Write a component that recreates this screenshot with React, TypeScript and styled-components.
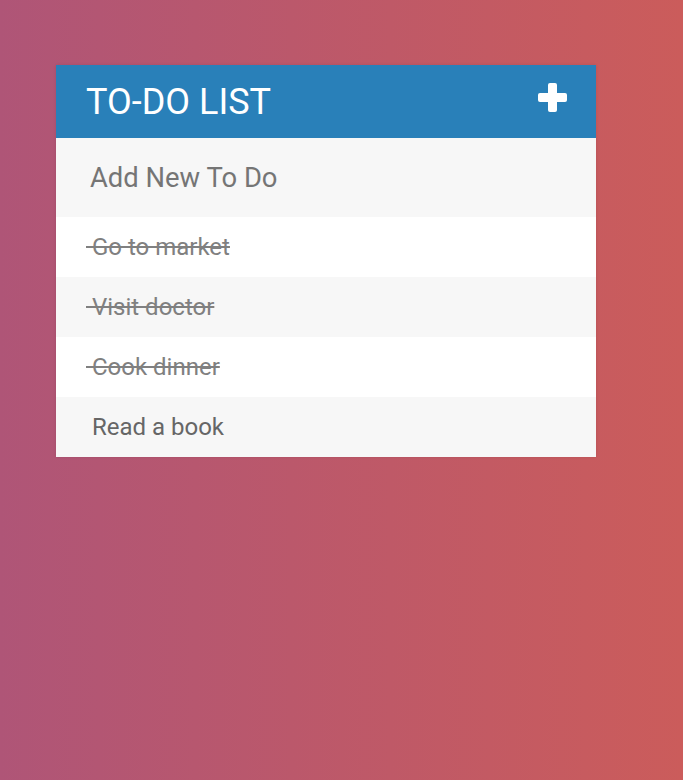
import React from "react";
import styled, { createGlobalStyle } from "styled-components";

const Global = createGlobalStyle`
  html, body { margin: 0; padding: 0; }
  body {
    min-height: 780px;
    background: linear-gradient(to right, #af5577, #cb5c5b);
    font-family: Roboto, "Noto Sans", sans-serif;
  }
`;

const Page = styled.div`
  padding: 65px 0 0 56px;
`;

const Card = styled.div`
  width: 540px;
  background: #fff;
  box-shadow: 0 0 3px rgba(0, 0, 0, 0.1);
`;

const Header = styled.h1`
  margin: 0;
  height: 73px;
  padding: 0 29px 0 30px;
  box-sizing: border-box;
  background: #2980b9;
  color: #fff;
  font-weight: 400;
  font-size: 36px;
  text-transform: uppercase;
  display: flex;
  align-items: center;
  justify-content: space-between;
`;

const Title = styled.span`
  margin-top: 1px;
`;

const PlusButton = styled.span`
  display: flex;
  margin-top: -9px;
`;

const Input = styled.input`
  display: block;
  width: 100%;
  height: 79px;
  box-sizing: border-box;
  border: none;
  outline: none;
  background: #f7f7f7;
  padding: 0 20px 0 34px;
  font-family: Roboto, "Noto Sans", sans-serif;
  font-size: 27.4px;
  color: #757575;
  &::placeholder { color: #757575; opacity: 1; }
`;

const List = styled.ul`
  list-style: none;
  margin: 0;
  padding: 0;
`;

const Item = styled.li<{ $done: boolean }>`
  height: 60px;
  line-height: 60px;
  padding-left: 30px;
  font-size: 24px;
  color: ${(p) => (p.$done ? "#808080" : "#666")};
  text-decoration: ${(p) => (p.$done ? "line-through" : "none")};
  background: #fff;
  white-space: pre;
  &:nth-child(2n) { background: #f7f7f7; }
`;

const todos = [
  { text: "Go to market", done: true },
  { text: "Visit doctor", done: true },
  { text: "Cook dinner", done: true },
  { text: "Read a book", done: false },
];

export default function App() {
  return (
    <>
      <Global />
      <Page>
        <Card>
          <Header>
            <Title>To-Do List</Title>
            <PlusButton>
              <svg width="29" height="29" viewBox="0 0 29 29">
                <rect x="10" y="0" width="9" height="29" rx="2" fill="#fff" />
                <rect x="0" y="10" width="29" height="9" rx="2" fill="#fff" />
              </svg>
            </PlusButton>
          </Header>
          <Input placeholder="Add New To Do" />
          <List>
            {todos.map((t) => (
              <Item key={t.text} $done={t.done}>
                {"\u00a0" + t.text}
              </Item>
            ))}
          </List>
        </Card>
      </Page>
    </>
  );
}
